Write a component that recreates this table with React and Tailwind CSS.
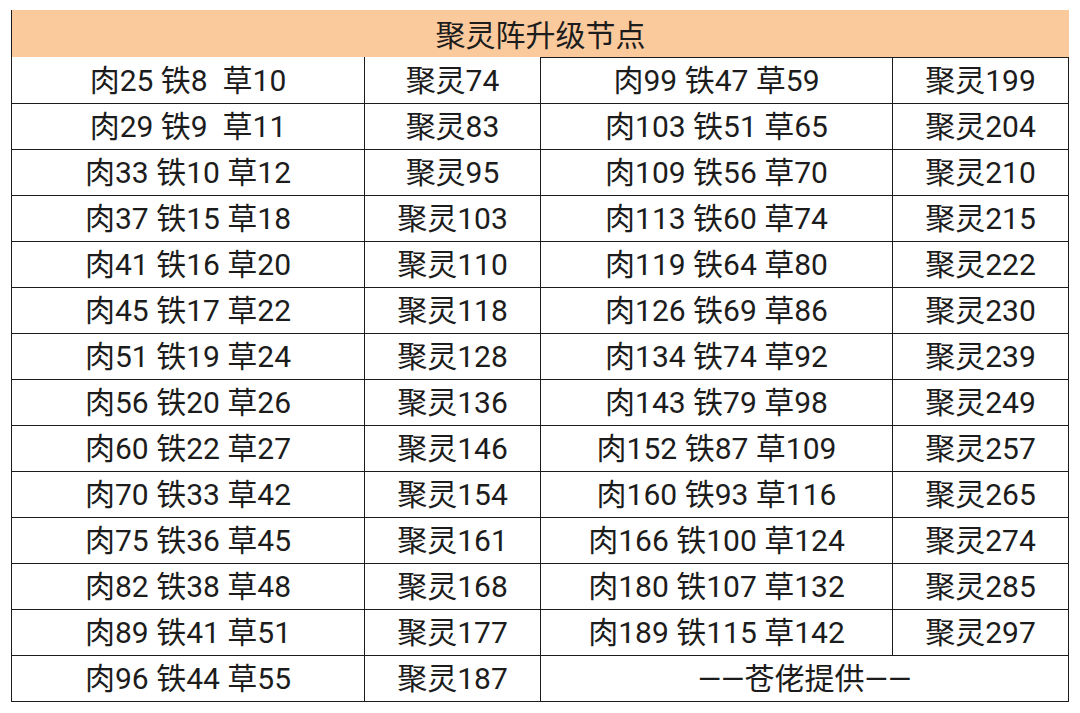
import React from 'react';

const rows = [
  ['肉25 铁8  草10', '聚灵74', '肉99 铁47 草59', '聚灵199'],
  ['肉29 铁9  草11', '聚灵83', '肉103 铁51 草65', '聚灵204'],
  ['肉33 铁10 草12', '聚灵95', '肉109 铁56 草70', '聚灵210'],
  ['肉37 铁15 草18', '聚灵103', '肉113 铁60 草74', '聚灵215'],
  ['肉41 铁16 草20', '聚灵110', '肉119 铁64 草80', '聚灵222'],
  ['肉45 铁17 草22', '聚灵118', '肉126 铁69 草86', '聚灵230'],
  ['肉51 铁19 草24', '聚灵128', '肉134 铁74 草92', '聚灵239'],
  ['肉56 铁20 草26', '聚灵136', '肉143 铁79 草98', '聚灵249'],
  ['肉60 铁22 草27', '聚灵146', '肉152 铁87 草109', '聚灵257'],
  ['肉70 铁33 草42', '聚灵154', '肉160 铁93 草116', '聚灵265'],
  ['肉75 铁36 草45', '聚灵161', '肉166 铁100 草124', '聚灵274'],
  ['肉82 铁38 草48', '聚灵168', '肉180 铁107 草132', '聚灵285'],
  ['肉89 铁41 草51', '聚灵177', '肉189 铁115 草142', '聚灵297'],
];

const cell = 'h-[46px] p-0 pt-[2px] text-center align-middle whitespace-pre border-[#1c1c1c] border-b-[1.5px]';

export default function App() {
  return (
    <div className="w-[1080px] h-[713px] bg-white pt-[10px] pl-[11px] text-[30px] leading-none text-[#1c1c1c] font-['Roboto','Noto_Sans_CJK_SC',sans-serif]">
      <table className="border-collapse table-fixed w-[1057px]">
        <colgroup>
          <col className="w-[353px]" />
          <col className="w-[176px]" />
          <col className="w-[352px]" />
          <col className="w-[176px]" />
        </colgroup>
        <tbody>
          <tr>
            <td colSpan={2} className="h-[47px] p-0 pt-[4px] text-center align-middle bg-[#fbca9c] border-l-[1.5px] border-[#1c1c1c]" >
              <div className="w-[1057px] -mr-[704px] relative">聚灵阵升级节点</div>
            </td>
            <td colSpan={2} className="h-[47px] p-0 bg-[#fbca9c] border-b-[1.5px] border-[#1c1c1c]"></td>
          </tr>
          {rows.map((r, i) => (
            <tr key={i}>
              <td className={`${cell} border-l-[1.5px] border-r-[1.5px]`}>{r[0]}</td>
              <td className={`${cell} border-r-[1.5px]`}>{r[1]}</td>
              <td className={`${cell} border-r-[1.5px]`}>{r[2]}</td>
              <td className={`${cell} border-r-[1.5px]`}>{r[3]}</td>
            </tr>
          ))}
          <tr>
            <td className={`${cell} border-l-[1.5px] border-r-[1.5px]`}>肉96 铁44 草55</td>
            <td className={`${cell} border-r-[1.5px]`}>聚灵187</td>
            <td colSpan={2} className={`${cell} border-r-[1.5px]`}>——苍佬提供——</td>
          </tr>
        </tbody>
      </table>
    </div>
  );
}
